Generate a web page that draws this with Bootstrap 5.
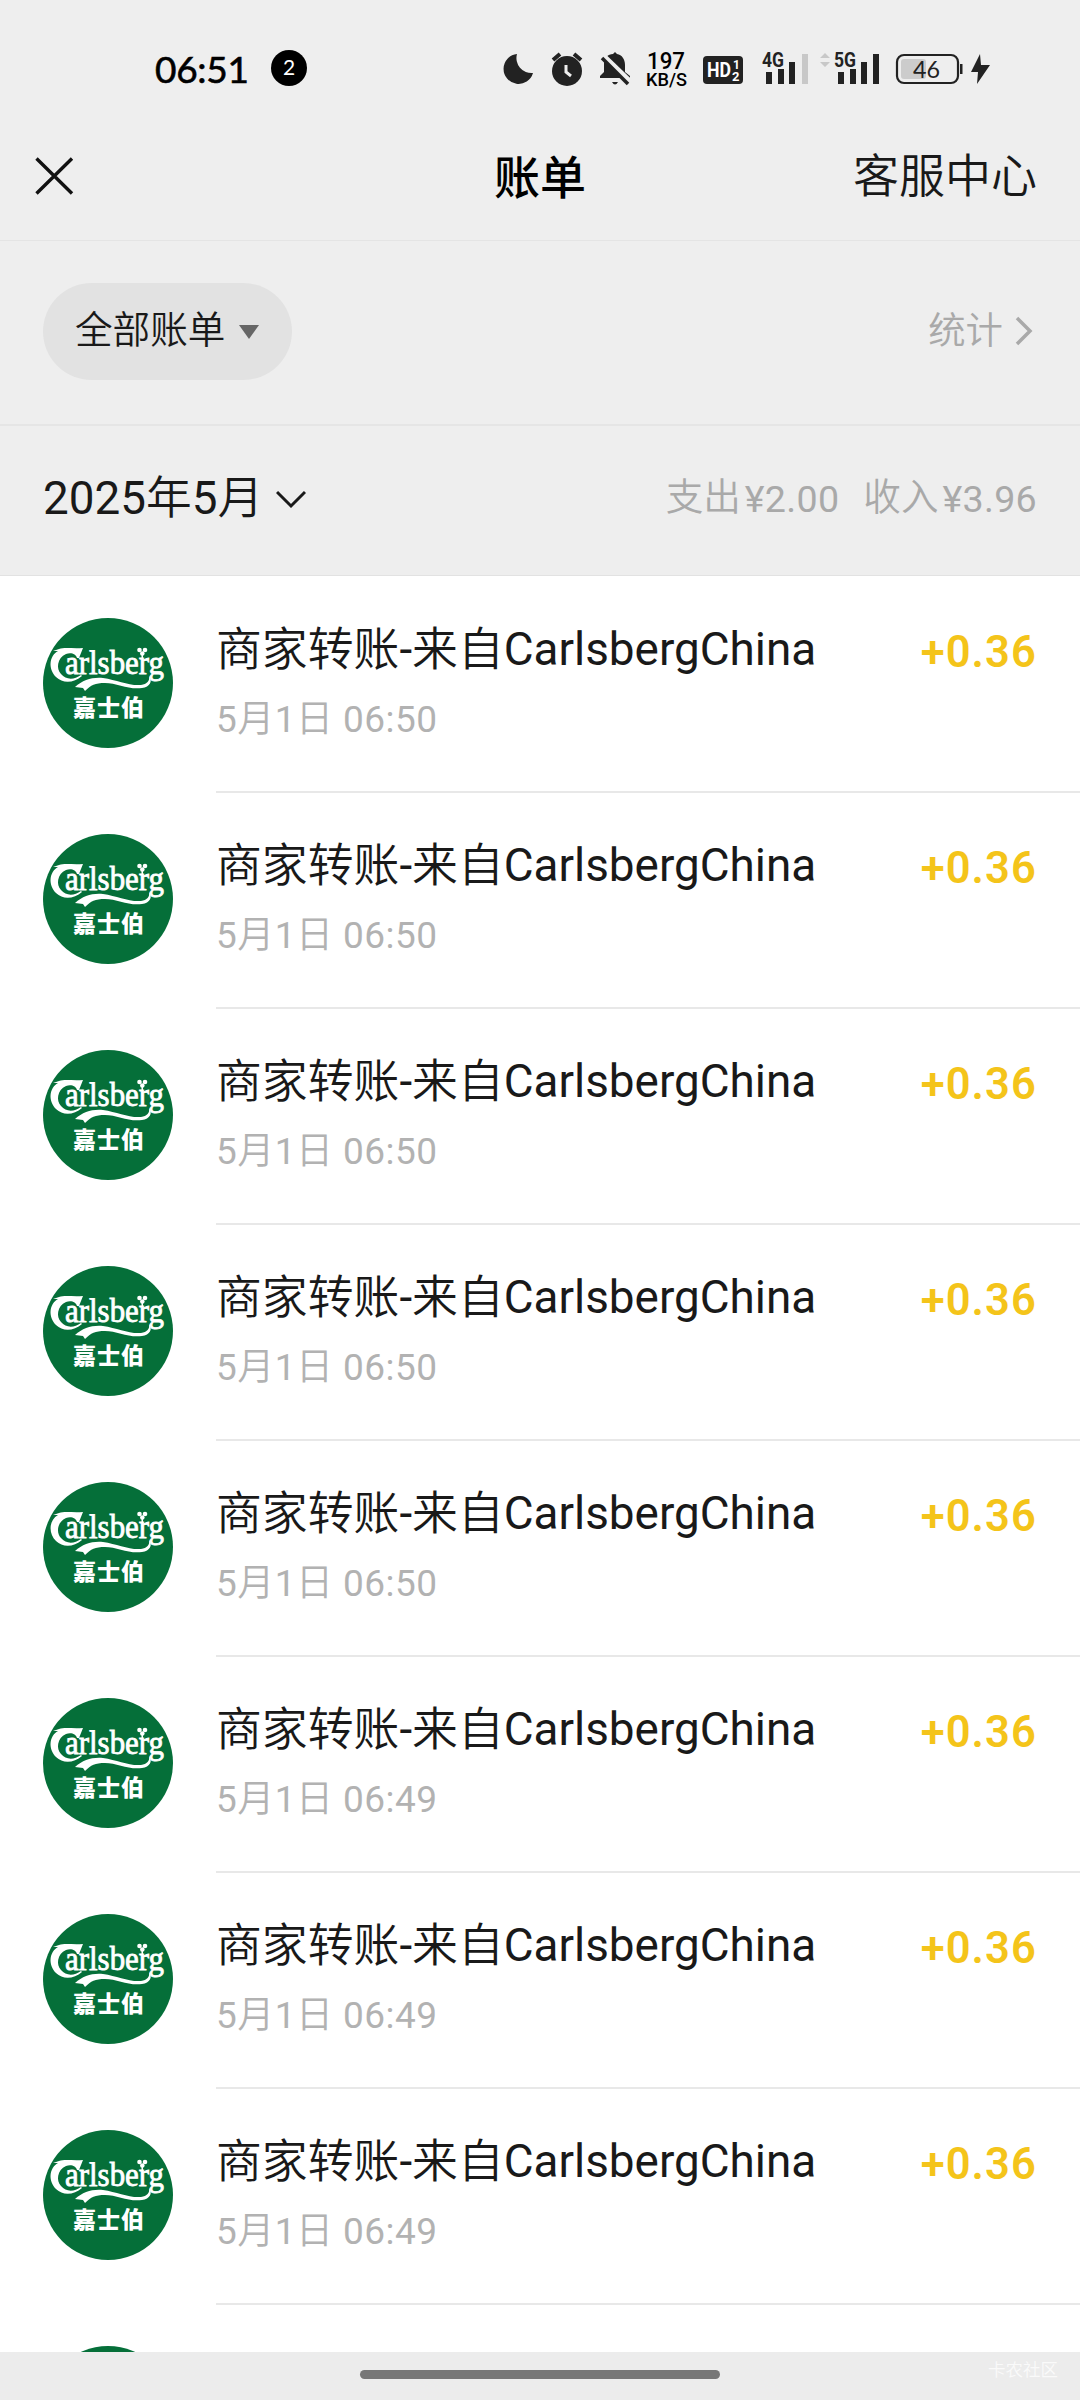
<!DOCTYPE html>
<html lang="zh-CN">
<head>
<meta charset="utf-8">
<title>账单</title>
<meta name="viewport" content="width=device-width, initial-scale=1">
<link rel="stylesheet" href="https://cdn.jsdelivr.net/npm/bootstrap@5.3.0/dist/css/bootstrap.min.css">
<style>
body{font-family:Roboto,"Noto Sans CJK SC DemiLight","Noto Sans CJK SC",sans-serif;color:#191919;background:#fff}
.screen{width:1080px;height:2400px;background:#eee}
.statusbar{height:120px}
.titlebar{height:121px;border-bottom:1px solid #e4e4e4;padding:0 43px 9px 35px;font-size:46px;line-height:60px}
.titlebar>*{flex:1 1 0}
.page-name{font-family:"Noto Sans CJK SC",sans-serif;font-weight:500;color:#000;padding:0 0 3px 8px}
.filterbar{height:185px;border-bottom:2px solid #e5e5e5;padding:0 43px;font-size:37.4px;line-height:50px}
.filter-pill{width:249px;height:97px;border-radius:49px;background:#e2e2e2;padding:0 33px 2px 32px;margin-top:-3px;font-size:37.6px;line-height:50px;color:#191919;border:0}
.soft{color:#a9a9a9}
.stats{padding-bottom:3px}
.monthbar{height:150px;border-bottom:1px solid #e2e2e2;padding:0 43px 3px}
.month{font-size:45.8px;line-height:60px}
.totals{font-size:37.6px;line-height:50px;padding-bottom:3px}
.figure-num{font-size:37.6px;letter-spacing:.3px;padding-top:2px}
.bills{height:1776px;padding-top:1px}
.bill{height:216px;padding-left:43px}
.bill-logo{width:130px;height:130px;margin:41px 43px 0 0}
.bill-body{height:216px;border-bottom:2px solid #e8e8e8;padding:41px 43px 0 0}
.bill-title{font-size:45.85px;line-height:62px}
.bill-time{font-size:37px;line-height:50px;margin-top:15px;color:#b2b2b2;letter-spacing:.45px}
.bill-sum{font-weight:600;font-size:43.5px;line-height:62px;color:#f4c41a;letter-spacing:1.1px;padding-top:4px}
.gesture{height:48px;background:#ececec}
.gesture-line{width:360px;height:9px;border-radius:5px;background:#777;left:360px;top:18px}
.stamp{right:22px;top:5px;font-size:17.5px;line-height:26px;color:#fafafa}
</style>
<script src="https://cdn.jsdelivr.net/npm/bootstrap@5.3.0/dist/js/bootstrap.bundle.min.js"></script>
</head>
<body>
<svg class="d-none">
  <symbol id="logo" viewBox="0 0 130 130">
    <circle cx="65" cy="65" r="65" fill="#056f39"/>
    <g fill="#fff" font-family="'Liberation Serif',serif">
      <path d="M16 31C22 29 30 31 40 30L36 40L34 40C33 36 28 34 23 36C14 40 13 51 18 56C23 62 31 62 38 57L39 58C31 65 20 66 13 59C5 51 6 38 15 33L10 33Z"/>
      <text x="22" y="56" font-size="33" stroke="#fff" stroke-width=".8" textLength="99" lengthAdjust="spacingAndGlyphs">arlsberg</text>
      <path d="M32 69C40 62 49 59 60 60C74 62 86 68 98 67C104 66 107 63 106 58C110 63 107 69 99 70C86 72 74 65 62 65C52 65 48 67 42 73L40 70Z"/>
      <circle cx="96.500" cy="32" r="2.300"/><circle cx="102" cy="32" r="2.300"/><circle cx="99.300" cy="35.500" r="2.300"/>
      <path d="M98.500 36H100V40H98.500Z"/>
      <text x="30" y="98" font-size="23" font-weight="900" font-family="'Noto Sans CJK SC',sans-serif" textLength="71">嘉士伯</text>
    </g>
  </symbol>
</svg>
<main class="screen overflow-hidden">
  <header class="statusbar">
    <svg class="d-block" width="1080" height="120" fill="#222">
      <g font-family="Lato,sans-serif">
        <text x="155" y="82.500" font-size="37" fill="#000" stroke="#000" stroke-width=".6" textLength="94">06:51</text>
        <circle cx="289" cy="68" r="18" fill="#000"/>
        <text x="289" y="75" font-size="21" fill="#fff" text-anchor="middle">2</text>
      </g>
      <path d="M517 54A15 15 0 1 0 533 73A15 15 0 0 1 517 54Z"/>
      <circle cx="567" cy="71" r="15"/>
      <path d="M553 60L560 54M581 60L574 54" stroke="#222" stroke-width="4"/>
      <path d="M566 65V72L571 76" fill="none" stroke="#eee" stroke-width="3"/>
      <path d="M600 78V76L604 72V64C604 58 608 54 613 54L615 52L617 54C622 55 625 59 625 65V72L630 76V78ZM612 82H618Q615 87 612 82Z"/>
      <path d="M603 56L630 82" stroke="#eee" stroke-width="6"/>
      <path d="M602 58L628 84" stroke="#222" stroke-width="3.5"/>
      <g fill="#000" font-family="Roboto,sans-serif" font-weight="500">
        <text x="647" y="69" font-size="24" textLength="38" lengthAdjust="spacingAndGlyphs">197</text>
        <text x="646" y="86" font-size="18" textLength="41" lengthAdjust="spacingAndGlyphs">KB/S</text>
      </g>
      <rect x="703" y="56" width="40" height="28" rx="4"/>
      <g font-family="Roboto,sans-serif" font-weight="700">
        <text x="707" y="77" font-size="21" fill="#fff" textLength="24" lengthAdjust="spacingAndGlyphs">HD</text>
        <text x="733" y="69" font-size="12" fill="#fff">1</text>
        <text x="732" y="80.500" font-size="13" fill="#fff">2</text>
        <text x="762" y="67" font-size="20" textLength="22" lengthAdjust="spacingAndGlyphs">4G</text>
        <text x="834" y="67" font-size="20" textLength="22" lengthAdjust="spacingAndGlyphs">5G</text>
      </g>
      <path d="M766 72h6v12h-6zM778 69h6v15h-6zM789 62h6v22h-6zM838 72h6v12h-6zM850 69h6v15h-6zM861 62h6v22h-6zM873 54h6v30h-6z"/>
      <path d="M802 54h6v30h-6zM820 58L825 53L830 58ZM820 62L825 67L830 62Z" fill="#c8c8c8"/>
      <rect x="901" y="59" width="25" height="20" rx="3" fill="#ccc"/>
      <rect x="897" y="55" width="61" height="28" rx="7" fill="none" stroke="#222" stroke-width="2.200"/>
      <rect x="960" y="64" width="2.500" height="10"/>
      <text x="913" y="77.500" font-size="23" font-family="Lato,sans-serif" textLength="27" lengthAdjust="spacingAndGlyphs">46</text>
      <path d="M980 54L971 72H978L977 84L990 65H981Z"/>
    </svg>
  </header>

  <nav class="titlebar d-flex align-items-center">
    <div class="d-flex"><svg width="39" height="38" fill="none" stroke="#111" stroke-width="3.400"><path d="M1.500 1.500L37 36.500M37 1.500L1.500 36.500"/></svg></div>
    <div class="page-name text-center">账单</div>
    <div class="text-end">客服中心</div>
  </nav>

  <section class="filterbar d-flex align-items-center justify-content-between">
    <button class="filter-pill d-flex align-items-center justify-content-between">全部账单<svg class="mt-1" width="20" height="14"><path d="M0 0H20L10 14Z" fill="#666"/></svg></button>
    <div class="soft stats d-flex align-items-center gap-2">统计<svg width="26" height="32" fill="none" stroke="#a9a9a9" stroke-width="3.500"><path d="M6 3L19 16L6 29"/></svg></div>
  </section>

  <section class="monthbar d-flex align-items-center justify-content-between">
    <div class="month d-flex align-items-center">2025年5月<svg width="30" height="19" style="margin-left:13px" fill="none" stroke="#191919" stroke-width="3"><path d="M1 2L15 16L29 2"/></svg></div>
    <div class="totals soft d-flex">支出<span class="figure-num ms-1">¥2.00</span><span class="ms-4">收入</span><span class="figure-num ms-1">¥3.96</span></div>
  </section>

  <section class="bills bg-white overflow-hidden" id="bills"></section>

  <footer class="gesture position-relative">
    <div class="gesture-line position-absolute"></div>
    <span class="stamp position-absolute">卡农社区</span>
  </footer>
</main>
<script>
const times = ['06:50','06:50','06:50','06:50','06:50','06:49','06:49','06:49'];
const logo = '<svg class="bill-logo flex-shrink-0"><use href="#logo"/></svg>';
// The last row is only just scrolled into view, so it needs no more than its avatar.
document.getElementById('bills').innerHTML = times.map(t => `
  <article class="bill d-flex">
    ${logo}
    <div class="bill-body flex-grow-1 d-flex justify-content-between">
      <div><div class="bill-title">商家转账-来自CarlsbergChina</div><div class="bill-time">5月1日 ${t}</div></div>
      <div class="bill-sum">+0.36</div>
    </div>
  </article>`).join('') + `<article class="bill d-flex">${logo}</article>`;
</script>
</body>
</html>
